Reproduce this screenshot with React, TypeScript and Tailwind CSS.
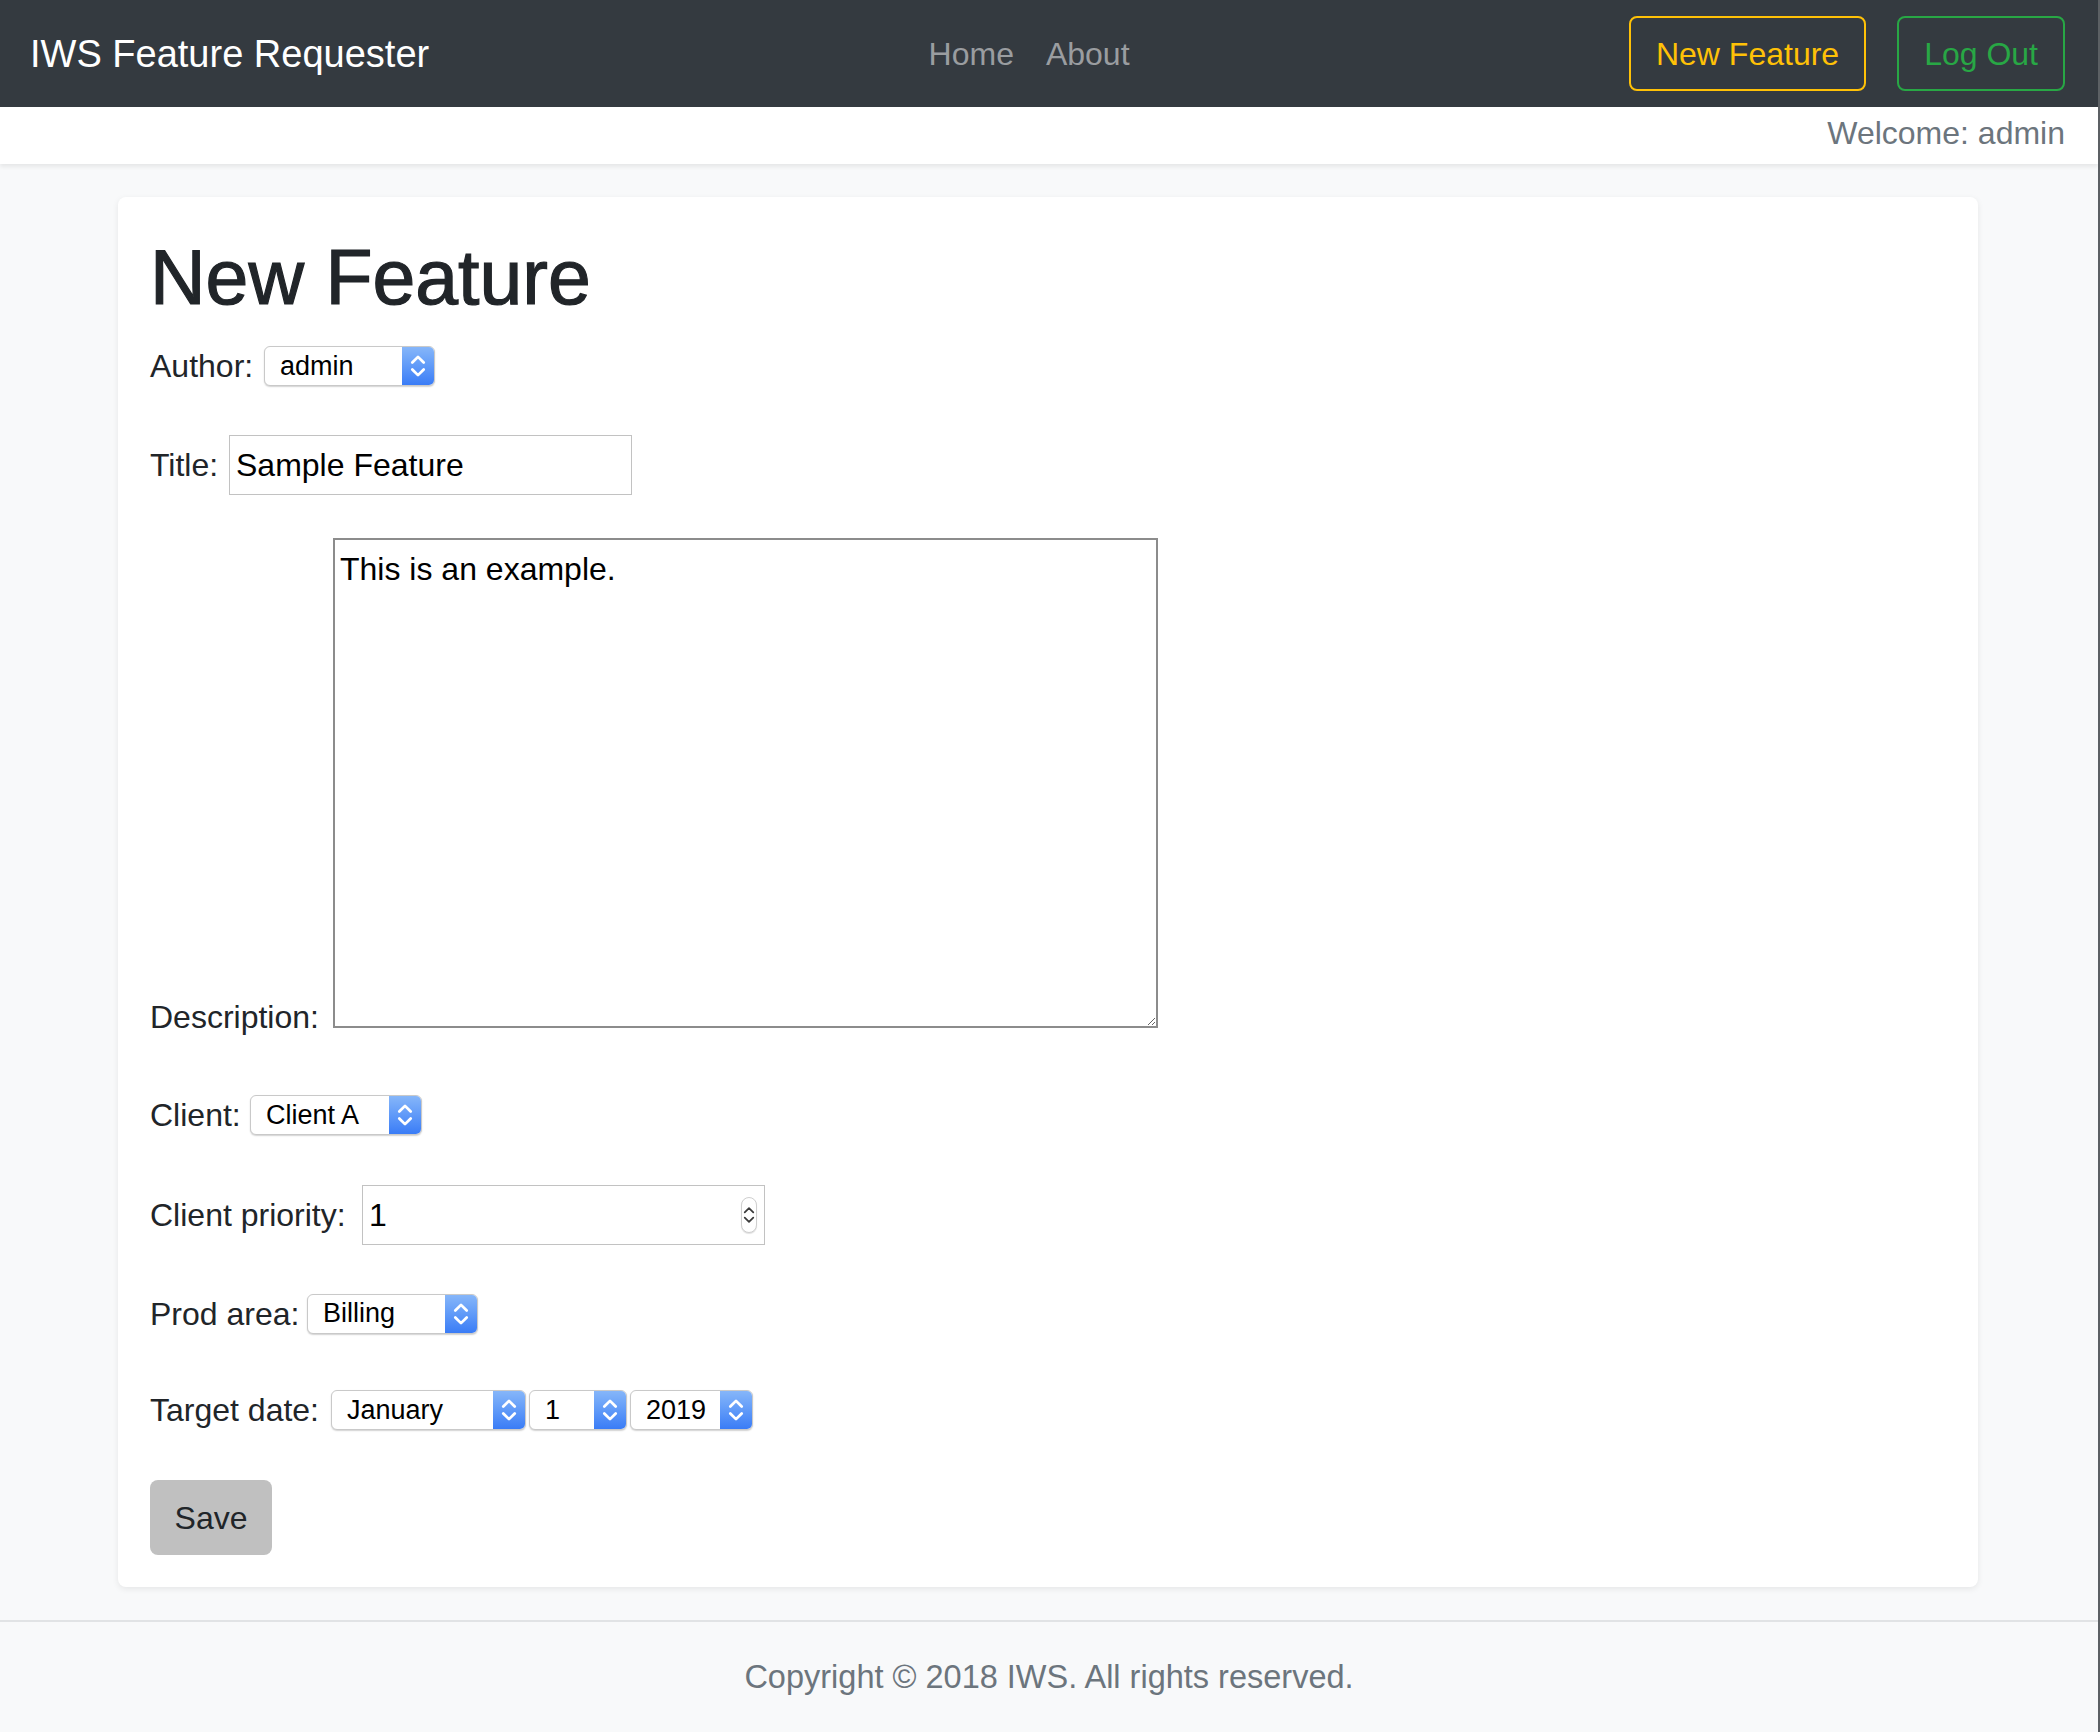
import React from "react";

function Chevrons({ color = "#ffffff", w = 16, h = 28, sw = 2.4 }: { color?: string; w?: number; h?: number; sw?: number }) {
  return (
    <svg width={w} height={h} viewBox="0 0 14 24" fill="none">
      <polyline points="2,9 7,4 12,9" stroke={color} strokeWidth={sw} strokeLinecap="round" strokeLinejoin="round" />
      <polyline points="2,15 7,20 12,15" stroke={color} strokeWidth={sw} strokeLinecap="round" strokeLinejoin="round" />
    </svg>
  );
}

function MacSelect({ value, className }: { value: string; className: string }) {
  return (
    <div
      className={
        "flex h-[40px] shrink-0 items-stretch overflow-hidden rounded-[6px] border border-[#c9c9c9] bg-white shadow-[0_1px_1.5px_rgba(0,0,0,0.18)] " +
        className
      }
    >
      <div className="flex flex-1 items-center pl-[15px] text-[27px] leading-none text-black">{value}</div>
      <div className="flex w-[32px] items-center justify-center bg-gradient-to-b from-[#86b6f9] to-[#3a7cf6]">
        <Chevrons />
      </div>
    </div>
  );
}

function Label({ text, className }: { text: string; className: string }) {
  return <span className={"shrink-0 whitespace-nowrap text-[32px] text-[#212529] " + className}>{text}</span>;
}

export default function App() {
  return (
    <div className="flex min-h-[1732px] bg-[#f8f9fa] font-['Liberation_Sans',Arial,sans-serif]">
      <div className="flex flex-1 flex-col">
        {/* Navbar */}
        <nav className="flex h-[107px] items-center bg-[#343a40] pl-[30px] pr-[33px]">
          <span className="whitespace-nowrap text-[38px] leading-none text-white">IWS Feature Requester</span>
          <div className="mx-auto flex gap-[32px] text-[32px] leading-none text-[#9a9da0]">
            <span>Home</span>
            <span>About</span>
          </div>
          <div className="flex items-center gap-[31px]">
            <div className="flex h-[75px] items-center rounded-[8px] border-2 border-[#ffc107] px-[25px] text-[32px] leading-none text-[#ffc107]">
              New Feature
            </div>
            <div className="flex h-[75px] items-center rounded-[8px] border-2 border-[#28a745] px-[25px] text-[32px] leading-none text-[#28a745]">
              Log Out
            </div>
          </div>
        </nav>

        {/* Welcome band */}
        <div className="flex h-[57px] items-center justify-end bg-white pr-[33px] shadow-[0_3px_4px_rgba(0,0,0,0.07)]">
          <span className="pb-[5px] text-[32px] leading-none text-[#6c757d]">Welcome: admin</span>
        </div>

        {/* Main */}
        <main className="flex-1 pl-[118px] pr-[120px] pt-[33px]">
          <div className="rounded-[8px] bg-white px-[32px] pb-[32px] pt-[33px] shadow-[0_2px_6px_rgba(0,0,0,0.08)]">
            <h1 className="text-[77px] leading-[94px] text-[#212529] [-webkit-text-stroke:1.2px_#212529]">New Feature</h1>

            {/* Author */}
            <div className="mt-[22px] flex h-[40px] items-center gap-[9px]">
              <Label text="Author:" className="w-[105px]" />
              <MacSelect value="admin" className="w-[171px]" />
            </div>

            {/* Title */}
            <div className="mt-[49px] flex h-[60px] items-center gap-[9px]">
              <Label text="Title:" className="w-[70px]" />
              <div className="flex h-[60px] w-[403px] items-center border border-[#c2c2c2] bg-white pl-[6px] text-[32px] text-black">
                Sample Feature
              </div>
            </div>

            {/* Description */}
            <div className="mt-[43px] flex items-end gap-[9px]">
              <Label text="Description:" className="w-[174px] leading-[22px]" />
              <textarea
                readOnly
                defaultValue="This is an example."
                className="h-[490px] w-[825px] resize border-2 border-[#8c8c8c] bg-white px-[5px] pt-[10px] text-[32px] leading-[38px] text-black outline-none"
              />
            </div>

            {/* Client */}
            <div className="mt-[67px] flex h-[40px] items-center gap-[9px]">
              <Label text="Client:" className="w-[91px]" />
              <MacSelect value="Client A" className="w-[172px]" />
            </div>

            {/* Client priority */}
            <div className="mt-[50px] flex h-[60px] items-center gap-[9px]">
              <Label text="Client priority:" className="w-[203px]" />
              <div className="flex h-[60px] w-[403px] items-center border border-[#c2c2c2] bg-white pl-[6px] pr-[7px] text-[32px] text-black">
                <span className="flex-1">1</span>
                <div className="flex h-[36px] w-[16px] items-center justify-center rounded-full border border-[#cfcfcf] bg-white shadow-[0_1px_1px_rgba(0,0,0,0.12)]">
                  <Chevrons color="#3a3a3a" w={12} h={28} sw={2} />
                </div>
              </div>
            </div>

            {/* Prod area */}
            <div className="mt-[48px] flex h-[41px] items-center gap-[9px]">
              <Label text="Prod area:" className="w-[148px]" />
              <MacSelect value="Billing" className="w-[171px]" />
            </div>

            {/* Target date */}
            <div className="mt-[56px] flex h-[40px] items-center gap-[9px]">
              <Label text="Target date:" className="w-[172px]" />
              <div className="flex gap-[3px]">
                <MacSelect value="January" className="w-[195px]" />
                <MacSelect value="1" className="w-[98px]" />
                <MacSelect value="2019" className="w-[123px]" />
              </div>
            </div>

            {/* Save */}
            <div className="mt-[50px]">
              <button className="flex h-[75px] w-[122px] items-center justify-center rounded-[8px] bg-[#c0c0c0] text-[32px] leading-none text-[#212529]">
                Save
              </button>
            </div>
          </div>
        </main>

        {/* Footer */}
        <footer className="mt-[33px] flex h-[112px] items-center justify-center border-t-2 border-[#e1e3e5] bg-[#f8f9fa]">
          <span className="text-[32.5px] leading-none text-[#6c757d]">Copyright © 2018 IWS. All rights reserved.</span>
        </footer>
      </div>
      <div className="w-[2px] bg-[#5c6064]" />
    </div>
  );
}
